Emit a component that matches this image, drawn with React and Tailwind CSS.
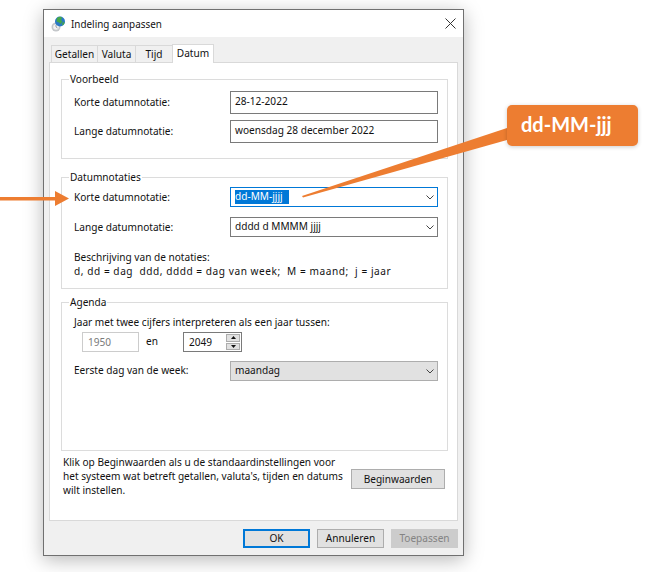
import React from 'react';

const font = "[font-family:'Noto_Sans',sans-serif]";

function Chevron() {
  return (
    <svg width="8" height="5" viewBox="0 0 8 5" className="absolute right-[3px] top-[7px]" fill="none" stroke="#444" strokeWidth="1">
      <path d="M0.5 0.5 L4 4 L7.5 0.5" />
    </svg>
  );
}

function FieldRow({ label, children, className = '', labelClass = 'pt-[1px]' }) {
  return (
    <div className={`flex items-center ${className}`}>
      <span className={`w-[156px] shrink-0 ${labelClass}`}>{label}</span>
      {children}
    </div>
  );
}

function TextBox({ value }) {
  return (
    <div className="w-[208px] h-[23px] border border-[#7a7a7a] bg-white pl-[4px] pr-1 leading-[18px]">{value}</div>
  );
}

function Combo({ children, disabled, focused }) {
  let cls = 'border-[#7a7a7a] bg-white';
  if (focused) cls = 'border-[#0078d7] bg-white';
  if (disabled) cls = 'border-[#adadad] bg-[#e1e1e1]';
  return (
    <div className={`relative w-[208px] h-[20px] border pl-[4px] leading-[17px] ${cls}`}>
      {children}
      <Chevron />
    </div>
  );
}

function Group({ title, className = '', children }) {
  return (
    <fieldset className={`border border-[#dcdcdc] ${className}`}>
      <legend className="ml-[7px] px-[1px] leading-[14px]">{title}</legend>
      <div className="pl-[12px]">{children}</div>
    </fieldset>
  );
}

function DlgButton({ children, className = 'border border-[#adadad] bg-[#e1e1e1]' }) {
  return (
    <div className={`flex items-center justify-center w-[67px] h-[19px] ${className}`}>{children}</div>
  );
}

function Tab({ label, active, className = '' }) {
  if (active) {
    return (
      <div className={`relative z-10 h-[19px] -mb-[1px] pb-[1px] border border-b-0 border-[#d9d9d9] bg-white flex items-center justify-center ${className}`}>{label}</div>
    );
  }
  return (
    <div className={`h-[17px] pt-[1px] border border-b-0 border-[#d9d9d9] bg-[#f0f0f0] flex items-center justify-center -mr-[1px] ${className}`}>{label}</div>
  );
}

function WorldIcon() {
  return (
    <svg width="15" height="16" viewBox="0 0 15 16">
      <circle cx="5" cy="11" r="4.5" fill="#c4c7ca" />
      <circle cx="5" cy="11" r="2.8" fill="#f2f2f2" />
      <path d="M5 9 L5 11 L6.5 12" fill="none" stroke="#8a8d90" strokeWidth="0.8" />
      <circle cx="9" cy="5.5" r="5" fill="#2a78c4" />
      <path d="M6 2 Q9 0 11 1.5 L10 4 L11.5 5.5 L9.5 8 L8 6.5 L5.5 5.5 Z" fill="#45a848" />
      <path d="M11.5 6.5 L13.7 6 L12.8 8.5 L11 9.5 Z" fill="#45a848" />
    </svg>
  );
}

export default function App() {
  return (
    <div className={`relative w-[646px] h-[572px] bg-white overflow-hidden pl-[43px] pt-[9px] text-[10.1px] text-[#111] ${font}`}>
      <div className="w-[421px] h-[547px] border border-[#707070] bg-[#f0f0f0] flex flex-col shadow-[0_4px_18px_rgba(0,0,0,0.28)]">
        <div className="h-[27px] shrink-0 bg-white flex items-center pl-[7px] pr-[7px]">
          <WorldIcon />
          <span className="ml-[5px] mt-[1px] text-[9.9px]">Indeling aanpassen</span>
          <svg width="11" height="11" viewBox="0 0 11 11" className="ml-auto" stroke="#333" strokeWidth="1">
            <path d="M0.5 0.5 L10.5 10.5 M10.5 0.5 L0.5 10.5" />
          </svg>
        </div>

        <div className="flex items-end h-[25px] shrink-0 pl-[7px]">
          <Tab label="Getallen" className="w-[47px]" />
          <Tab label="Valuta" className="w-[39px]" />
          <Tab label="Tijd" className="w-[38px]" />
          <Tab label="Datum" active className="w-[42px]" />
        </div>

        <div className="mx-[5px] h-[459px] shrink-0 border border-[#d9d9d9] bg-white pl-[11px] pr-[9px] pt-[9px]">
          <Group title="Voorbeeld" className="h-[87px]">
            <FieldRow label="Korte datumnotatie:" className="mt-[5px]">
              <TextBox value="28-12-2022" />
            </FieldRow>
            <FieldRow label="Lange datumnotatie:" className="mt-[6px]">
              <TextBox value="woensdag 28 december 2022" />
            </FieldRow>
          </Group>

          <Group title="Datumnotaties" className="h-[119px] mt-[11px]">
            <FieldRow label="Korte datumnotatie:" className="mt-[3px]" labelClass="pt-[2px]">
              <Combo focused>
                <span className="inline-block w-[54px] h-[14px] leading-[13px] bg-[#0078d7] text-white">dd-MM-jjjj</span>
              </Combo>
            </FieldRow>
            <FieldRow label="Lange datumnotatie:" className="mt-[10px]" labelClass="pt-[2px]">
              <Combo>dddd d MMMM jjjj</Combo>
            </FieldRow>
            <p className="mt-[13px] leading-[14px]">
              Beschrijving van de notaties:
              <br />
              <span className="tracking-[0.55px]">d, dd = dag&nbsp; ddd, dddd = dag van week;&nbsp; M = maand;&nbsp; j = jaar</span>
            </p>
          </Group>

          <Group title="Agenda" className="h-[156px] mt-[6px]">
            <p className="mt-[6px] leading-[14px]">Jaar met twee cijfers interpreteren als een jaar tussen:</p>
            <div className="flex items-center mt-[3px] ml-[8px] h-[20px]">
              <div className="w-[57px] h-[20px] border border-[#ccc] pl-[5px] leading-[18px] text-[#7a7a7a]">1950</div>
              <span className="ml-[7px] w-[37px]">en</span>
              <div className="flex w-[59px] h-[20px] border border-[#7a7a7a] pl-[5px] leading-[18px]">
                <span className="flex-1">2049</span>
                <div className="flex flex-col w-[16px] gap-[1px] p-[1px]">
                  <div className="flex-1 border border-[#adadad] bg-[#e1e1e1] flex items-center justify-center">
                    <svg width="5" height="3" viewBox="0 0 5 3"><path d="M2.5 0 L5 3 L0 3 Z" fill="#111" /></svg>
                  </div>
                  <div className="flex-1 border border-[#adadad] bg-[#e1e1e1] flex items-center justify-center">
                    <svg width="5" height="3" viewBox="0 0 5 3"><path d="M0 0 L5 0 L2.5 3 Z" fill="#111" /></svg>
                  </div>
                </div>
              </div>
            </div>
            <FieldRow label="Eerste dag van de week:" className="mt-[9px]" labelClass="">
              <Combo disabled>maandag</Combo>
            </FieldRow>
          </Group>

          <div className="flex items-start mt-[4px] pl-[2px]">
            <p className="w-[288px] shrink-0 leading-[14px]">
              Klik op Beginwaarden als u de standaardinstellingen voor het systeem wat betreft getallen, valuta's, tijden en datums wilt instellen.
            </p>
            <div className="w-[94px] h-[20px] mt-[14px] pt-[1px] flex items-center justify-center border border-[#adadad] bg-[#e1e1e1]">Beginwaarden</div>
          </div>
        </div>

        <div className="flex justify-end gap-[7px] pr-[5px] mt-[8px]">
          <DlgButton className="border-2 border-[#0078d7] bg-[#e1e1e1]">OK</DlgButton>
          <DlgButton>Annuleren</DlgButton>
          <DlgButton className="border border-[#cccccc] bg-[#cccccc] text-[#838383]">Toepassen</DlgButton>
        </div>
      </div>

      <svg width="646" height="572" viewBox="0 0 646 572" className="absolute inset-0 pointer-events-none">
        <path d="M507 128 L507 140 L303 197.5 L302 196 Z" fill="#ed7d31" />
        <path d="M0 197 L55 197 L55 191 L69 198.5 L55 206 L55 200.5 L0 200.5 Z" fill="#ed7d31" />
      </svg>
      <div className="absolute left-[507px] top-[105px] w-[131px] h-[41px] rounded-[5px] bg-[#ed7d31] text-white text-[20px] font-bold flex items-center pl-[14px] pb-[3px] shadow-[0_1px_4px_rgba(0,0,0,0.2)] [font-family:Lato,sans-serif]">
        dd-MM-jjj
      </div>
    </div>
  );
}
